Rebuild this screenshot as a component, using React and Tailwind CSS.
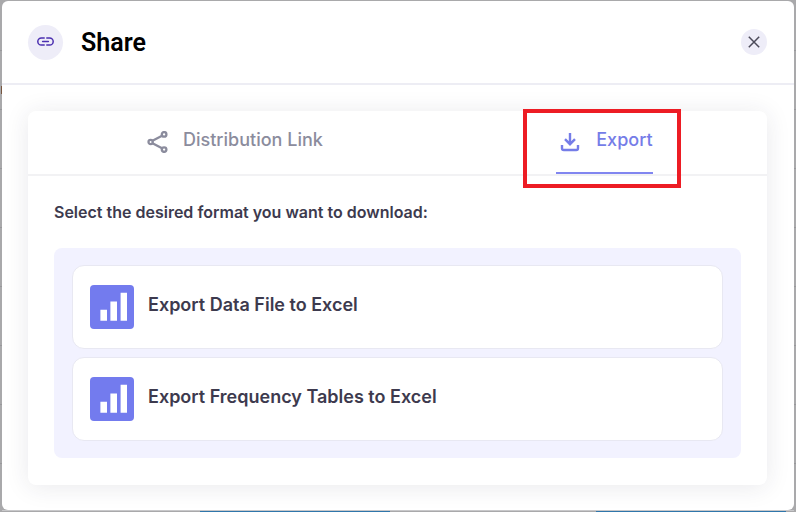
import React from "react";

function LinkIcon() {
  return (
    <svg width="17" height="9" viewBox="0 0 17 9" fill="none" stroke="#4b2fb0" strokeWidth="1.5" strokeLinecap="round" aria-hidden="true">
      <path d="M7.2 .9H4.4a3.6 3.6 0 0 0 0 7.2h2.8M9.8 .9h2.8a3.6 3.6 0 0 1 0 7.2H9.8M5.6 4.5h5.8" />
    </svg>
  );
}

function ShareIcon() {
  return (
    <svg width="22" height="22" viewBox="0 0 22 22" fill="none" stroke="currentColor" strokeWidth="2.3" aria-hidden="true">
      <path d="M5 10 16 4.2M5 12l11 5.8" />
      <circle cx="3.6" cy="11" r="2.1" fill="#fff" />
      <circle cx="17.1" cy="3.4" r="2.3" fill="#fff" />
      <circle cx="17.1" cy="18.6" r="2.3" fill="#fff" />
    </svg>
  );
}

function DownloadIcon() {
  return (
    <svg width="20" height="20" viewBox="0 0 20 20" fill="none" stroke="currentColor" strokeWidth="2.4" aria-hidden="true">
      <path d="M10 1v11M5 7.2l5 5 5-5" />
      <path d="M2 13v3.2q0 1.8 1.8 1.8h12.4q1.8 0 1.8-1.8V13" />
    </svg>
  );
}

function ChartIcon() {
  return (
    <svg className="shrink-0" width="44" height="44" viewBox="0 0 44 44" aria-hidden="true">
      <rect width="44" height="44" rx="4" fill="#737bee" />
      <path d="M10.4 24.7H17v11h-6.6zM20.4 16.4H27v19.3h-6.6zM30.6 7.8H37v27.9h-6.4z" fill="#fff" />
    </svg>
  );
}

const exportOptions = ["Export Data File to Excel", "Export Frequency Tables to Excel"];

export default function App() {
  return (
    <div className="relative min-h-screen bg-[#a9a9ab] bg-[repeating-linear-gradient(#a9a9ab_0_50px,#98989b_50px_51px,#a9a9ab_51px_59px)] px-0.5 pt-px font-['Inter',sans-serif]">
      <span className="absolute top-[86px] left-px h-2 w-px bg-[#77553f]" />
      <div role="dialog" aria-labelledby="share-title" className="rounded-md bg-white">
        <header className="flex h-[84px] items-center border-b-2 border-[#ededf4] pr-[27px] pl-[26px]">
          <span className="flex size-[35px] items-center justify-center rounded-full bg-[#eeedf8] pb-0.5">
            <LinkIcon />
          </span>
          <h1 id="share-title" className="ml-[18px] pt-0.5 font-['Roboto',sans-serif] text-[25px] font-semibold text-black">
            Share
          </h1>
          <button type="button" aria-label="Close" className="ml-auto flex size-[26px] items-center justify-center rounded-full bg-[#eeedf8] text-[#4b4a59]">
            <svg width="12" height="12" viewBox="0 0 12 12" fill="none" stroke="currentColor" strokeWidth="1.5" aria-hidden="true">
              <path d="m.8.8 10.4 10.4M11.2.8.8 11.2" />
            </svg>
          </button>
        </header>

        <main className="pt-[26px] pr-[27px] pb-[25px] pl-[26px]">
          <div className="rounded-lg bg-white pb-[27px] shadow-[0_2px_24px_rgba(40,40,70,0.10)]">
            <div role="tablist" className="grid h-[65px] grid-cols-[56%_44%] border-b-2 border-[#f2f2f4] text-lg font-medium">
              <button type="button" role="tab" aria-selected="false" className="flex items-center justify-center gap-3.5 pb-0.5 text-[#8b8c9d]">
                <ShareIcon />
                <span className="pb-1">Distribution Link</span>
              </button>
              <div className="flex justify-center">
                <button type="button" role="tab" aria-selected="true" className="relative flex h-[63px] items-center gap-4 border-b-2 border-[#8186f0] pl-1 text-[#757de8]">
                  <DownloadIcon />
                  <span className="pb-1">Export</span>
                  <span className="pointer-events-none absolute -top-0.5 -right-7 -bottom-4 -left-[33px] border-4 border-[#ed1c24]" />
                </button>
              </div>
            </div>

            <section className="px-[26px] pt-6">
              <h2 className="text-base leading-6 font-semibold text-[#3d3a4e]">Select the desired format you want to download:</h2>
              <div className="mt-6 flex flex-col gap-2 rounded-lg bg-[#f2f2ff] px-[18px] py-[17px]">
                {exportOptions.map((label) => (
                  <button
                    key={label}
                    type="button"
                    className="flex h-[84px] items-center gap-3.5 rounded-xl border border-[#e8e8f2] bg-white px-[17px] text-lg font-semibold text-[#3d3a4e]"
                  >
                    <ChartIcon />
                    <span className="pb-1">{label}</span>
                  </button>
                ))}
              </div>
            </section>
          </div>
        </main>
      </div>
      <div className="flex h-0.5 border-t border-[#c8c8ca]">
        <span className="ml-[25%] w-[24%] bg-[#2f76ab]" />
        <span className="ml-[26%] w-[24%] bg-[#2f76ab]" />
      </div>
    </div>
  );
}
